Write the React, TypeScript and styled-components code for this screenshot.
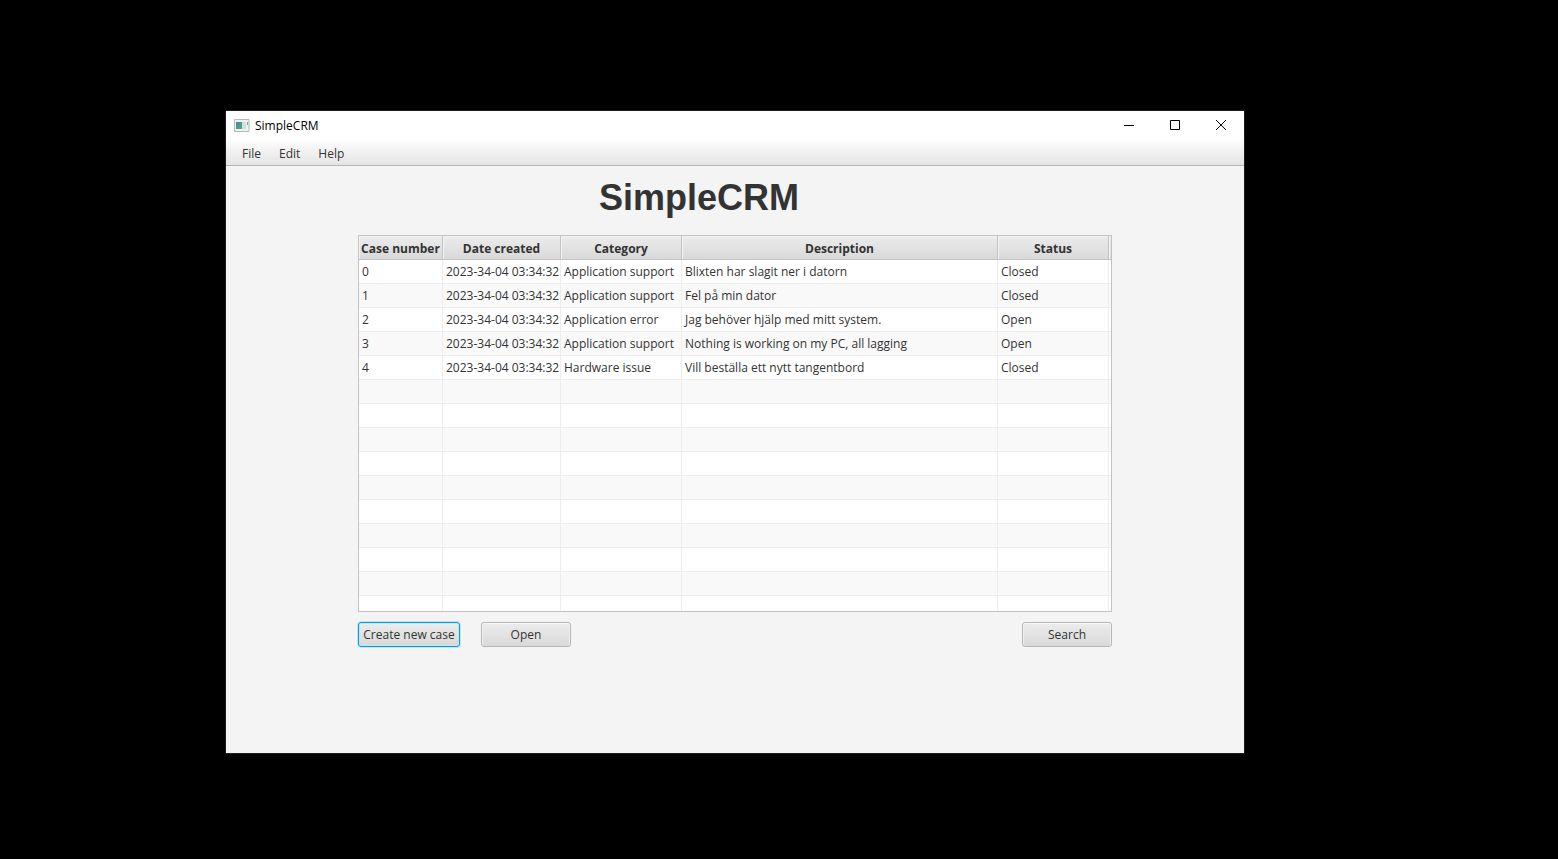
import React from 'react';
import styled, { createGlobalStyle, css } from 'styled-components';

const GlobalStyle = createGlobalStyle`
  * { box-sizing: border-box; }
  body {
    margin: 0;
    background: #000;
    color: #333;
    font: 12px/16px "Segoe UI", "Open Sans", "Noto Sans", sans-serif;
  }
`;

const Desktop = styled.div`
  display: flex;
  min-height: 100vh;
  padding: 111px 314px 106px 226px;
`;

const Window = styled.main`
  display: flex;
  flex: 1;
  flex-direction: column;
  min-width: 0;
  background: #f4f4f4;
  box-shadow: 0 0 0 1px #1c1c1c;
`;

const TitleBar = styled.header`
  display: flex;
  align-items: flex-start;
  height: 29px;
  padding-left: 8px;
  background: #fff;
  color: #000;
`;

const IconSlot = styled.span`
  display: flex;
  align-items: center;
  height: 28px;
`;

const AppName = styled.span`
  flex: 1;
  padding-left: 5px;
  line-height: 29px;
`;

const WindowButton = styled.button`
  display: flex;
  align-items: center;
  justify-content: center;
  width: 46px;
  height: 28px;
  padding: 0;
  border: 0;
  background: transparent;
`;

const MenuBar = styled.nav`
  display: flex;
  height: 26px;
  padding: 0 7px;
  border-bottom: 1px solid #b5b5b5;
  background: linear-gradient(#fdfdfd, #e4e4e4);
`;

const MenuButton = styled.button`
  padding: 2px 9px 0;
  border: 0;
  background: transparent;
  color: #333;
  font: inherit;
`;

const Content = styled.section`
  flex: 1;
  padding: 8px 132px 0;
`;

const Title = styled.h1`
  margin: 0 72px 13px 0;
  color: #333;
  font: bold 36px/48px Arial, "Liberation Sans", sans-serif;
  text-align: center;
`;

const TableFrame = styled.div`
  height: 377px;
  overflow: hidden;
  border: 1px solid #c3c3c3;
  background: #fff;
`;

const CaseTable = styled.table`
  width: 100%;
  border-spacing: 0;
  table-layout: fixed;
`;

const Column = styled.col<{ $width?: number }>`
  ${({ $width }) => $width && css`width: ${$width}px;`}
`;

const HeadCell = styled.th`
  height: 24px;
  padding: 3px 0 0;
  border-right: 1px solid #c3c3c3;
  border-bottom: 1px solid #c3c3c3;
  background: linear-gradient(#ececec, #d9d9d9);
  box-shadow: inset 1px 1px #f4f4f4;
  line-height: 16px;
  white-space: nowrap;

  &:last-child { border-right: 0; }
`;

const Row = styled.tr`
  background: #fff;
  &:nth-child(even) { background: #f9f9f9; }
`;

const Cell = styled.td`
  height: 24px;
  padding: 0 0 0 3px;
  border-right: 1px solid #ededed;
  border-bottom: 1px solid #ededed;
  line-height: 16px;
  white-space: nowrap;

  &:last-child {
    padding: 0;
    border-right: 0;
  }
`;

const Actions = styled.div`
  display: flex;
  gap: 21px;
  padding-top: 10px;
`;

const ActionButton = styled.button<{ $active?: boolean; $end?: boolean }>`
  width: 90px;
  height: 25px;
  padding: 0;
  border: 1px solid #b5b5b5;
  border-radius: 3px;
  background: linear-gradient(#ececec, #d9d9d9);
  box-shadow: inset 0 1px #f8f8f8, inset 1px 0 #f0f0f0, inset -1px 0 #f0f0f0;
  color: #333;
  font: inherit;
  white-space: nowrap;

  ${({ $active }) => $active && css`
    width: 102px;
    border-color: #039ed3;
    box-shadow: 0 0 0 1px #c5e4ee, inset 0 0 0 1px #c5e4ee;
  `}
  ${({ $end }) => $end && css`margin-left: auto;`}
`;

const headings = ['Case number', 'Date created', 'Category', 'Description', 'Status'];
const widths = [84, 118, 121, undefined, 111, 2];
const created = '2023-34-04 03:34:32';
const cases = [
  ['0', created, 'Application support', 'Blixten har slagit ner i datorn', 'Closed'],
  ['1', created, 'Application support', 'Fel på min dator', 'Closed'],
  ['2', created, 'Application error', 'Jag behöver hjälp med mitt system.', 'Open'],
  ['3', created, 'Application support', 'Nothing is working on my PC, all lagging', 'Open'],
  ['4', created, 'Hardware issue', 'Vill beställa ett nytt tangentbord', 'Closed'],
];
const emptyRow = ['', '', '', '', ''];
const rows = [...cases, ...Array.from({ length: 10 }, () => emptyRow)];

function AppIcon() {
  return (
    <svg width="16" height="16" viewBox="0 0 16 16" aria-hidden="true">
      <defs>
        <linearGradient id="pane" x1="0" y1="0" x2="1" y2="1">
          <stop offset="0" stopColor="#4c83ad" />
          <stop offset="1" stopColor="#55ad78" />
        </linearGradient>
      </defs>
      <path d="M.5 2.5h14.500v12H.5z" fill="#eef0f2" stroke="#b4b9bd" />
      <path d="M2 5h6v7H2z" fill="url(#pane)" />
      <path d="M8 5h4v7H8z" fill="#d5dddf" />
      <path d="M13 5h1v3h-1z" fill="#79a98c" />
    </svg>
  );
}

function ControlIcon({ d }: { d: string }) {
  return (
    <svg width="10" height="10" viewBox="0 0 10 10" fill="none" stroke="#000" aria-hidden="true">
      <path d={d} />
    </svg>
  );
}

export default function App() {
  return (
    <Desktop>
      <GlobalStyle />
      <Window>
        <TitleBar>
          <IconSlot><AppIcon /></IconSlot>
          <AppName>SimpleCRM</AppName>
          <WindowButton aria-label="Minimize"><ControlIcon d="M0 5.5h10" /></WindowButton>
          <WindowButton aria-label="Maximize"><ControlIcon d="M.5 .5h9v9h-9z" /></WindowButton>
          <WindowButton aria-label="Close"><ControlIcon d="M0 0l10 10M10 0L0 10" /></WindowButton>
        </TitleBar>
        <MenuBar aria-label="Main menu">
          {['File', 'Edit', 'Help'].map((name) => <MenuButton key={name}>{name}</MenuButton>)}
        </MenuBar>
        <Content>
          <Title>SimpleCRM</Title>
          <TableFrame>
            <CaseTable aria-label="Cases">
              <colgroup>
                {widths.map((width, i) => <Column key={i} $width={width} />)}
              </colgroup>
              <thead>
                <tr>
                  {headings.map((heading) => <HeadCell key={heading} scope="col">{heading}</HeadCell>)}
                  <HeadCell as="td" />
                </tr>
              </thead>
              <tbody>
                {rows.map((row, r) => (
                  <Row key={r}>
                    {row.map((value, c) => <Cell key={c}>{value}</Cell>)}
                    <Cell />
                  </Row>
                ))}
              </tbody>
            </CaseTable>
          </TableFrame>
          <Actions>
            <ActionButton $active>Create new case</ActionButton>
            <ActionButton>Open</ActionButton>
            <ActionButton $end>Search</ActionButton>
          </Actions>
        </Content>
      </Window>
    </Desktop>
  );
}
